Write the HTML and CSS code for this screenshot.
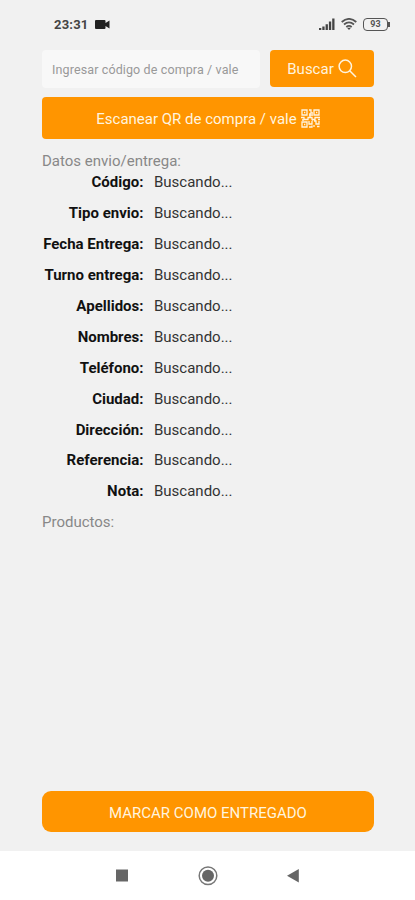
FILE: index.html
```html
<!DOCTYPE html>
<html lang="es">
<head>
    <meta charset="UTF-8">
    <meta name="viewport" content="width=device-width, initial-scale=1.0">
    <title>Entregas</title>
    <link rel="stylesheet" href="styles.css">
</head>
<body>
    <header class="status-bar">
        <span class="clock">23:31</span>
        <svg class="camera" width="15" height="9" viewBox="0 0 15 9"><path d="M1 0h8.500q1 0 1 1v2L14.500 .5v8L10.500 6v2q0 1-1 1H1Q0 9 0 8V1Q0 0 1 0z"/></svg>
        <div class="status-icons">
            <svg width="16" height="12" viewBox="0 0 16 12"><path d="M0 10h2.300v2H0zM3.300 8.500h2.300V12H3.300zM6.600 6.300h2.300V12H6.600zM9.900 3.500h2.300V12H9.900zM13.200 .5h2.300V12h-2.300z"/></svg>
            <svg width="16" height="12" viewBox="0 0 16 12" fill="none" stroke="#555" stroke-width="1.800"><path d="M.7 4Q8-2.200 15.300 4M3 6.500q5-4.200 10 0M5.300 9q2.700-2.200 5.400 0"/><path d="M6 9.800h4L8 12z" fill="#444" stroke="none"/></svg>
            <div class="battery">93</div>
        </div>
    </header>

    <main class="container">
        <div class="search">
            <input class="code-input" type="text" placeholder="Ingresar código de compra / vale">
            <button class="button button-search">
                Buscar
                <svg width="19" height="19" viewBox="0 0 19 19" fill="none" stroke="#fff4df" stroke-width="1.500"><circle cx="7.300" cy="7.300" r="6.200"/><path d="M11.700 11.700l6.300 6.300"/></svg>
            </button>
        </div>
        <button class="button button-scan">
            Escanear QR de compra / vale
            <svg width="19" height="19" viewBox="0 0 19 19" fill="none" stroke="#fff4df" stroke-width="1.300">
                <path d="M1 1h5v5H1zM13 1h5v5h-5zM1 13h5v5H1z"/>
                <path d="M3 3.500h1.300M15 3.500h1.300M3 15.500h1.300M8 1h2v3h2M8 6h4M9 4v4M0 8.500h3v2h4v-2h4v2h3v-2h5M1 11h2M8 12v3h3v-3M8 18h3v-1.500M13 12h2v3h3v-3M13 18v-2M16 17.500h2.500M11 11h1M17 10.500h2"/>
            </svg>
        </button>

        <h2 class="section-title">Datos envio/entrega:</h2>
        <dl class="details">
            <dt>Código:</dt><dd>Buscando...</dd>
            <dt>Tipo envio:</dt><dd>Buscando...</dd>
            <dt>Fecha Entrega:</dt><dd>Buscando...</dd>
            <dt>Turno entrega:</dt><dd>Buscando...</dd>
            <dt>Apellidos:</dt><dd>Buscando...</dd>
            <dt>Nombres:</dt><dd>Buscando...</dd>
            <dt>Teléfono:</dt><dd>Buscando...</dd>
            <dt>Ciudad:</dt><dd>Buscando...</dd>
            <dt>Dirección:</dt><dd>Buscando...</dd>
            <dt>Referencia:</dt><dd>Buscando...</dd>
            <dt>Nota:</dt><dd>Buscando...</dd>
        </dl>
        <h2 class="section-title">Productos:</h2>

        <button class="button button-deliver">MARCAR COMO ENTREGADO</button>
    </main>

    <nav class="nav-bar">
        <svg width="20" height="20" viewBox="0 0 20 20"><path d="M4 3.500h12v12H4z"/></svg>
        <svg width="20" height="20" viewBox="0 0 20 20"><circle cx="10" cy="9.800" r="8.800" fill="none" stroke="#777" stroke-width="1.500"/><circle cx="10" cy="9.800" r="6"/></svg>
        <svg width="20" height="20" viewBox="0 0 20 20"><path d="M14.800 3v13.500L3 9.800z"/></svg>
    </nav>
</body>
</html>
```

FILE: styles.css
```css
* {
    box-sizing: border-box;
}
body {
    display: flex;
    flex-direction: column;
    height: 900px;
    margin: 0;
    background-color: #f1f1f1;
    color: #333;
    font-family: Roboto, "Liberation Sans", sans-serif;
    font-size: 15px;
}
svg {
    flex: none;
}
.status-bar {
    display: flex;
    align-items: center;
    height: 50px;
    padding: 0 25px 2px 54px;
    fill: #444;
}
.clock {
    color: #444;
    font-size: 13px;
    font-weight: bold;
    letter-spacing: 0.2px;
}
.camera {
    margin-left: 6px;
    fill: #222;
}
.status-icons {
    display: flex;
    align-items: center;
    gap: 6px;
    margin-left: auto;
}
.battery {
    position: relative;
    width: 25px;
    height: 13px;
    margin-right: 2px;
    border: 1.5px solid #555;
    border-radius: 4px;
    color: #555;
    font-size: 9px;
    font-weight: bold;
    line-height: 11px;
    text-align: center;
}
.battery::after {
    content: "";
    position: absolute;
    top: 3px;
    right: -3px;
    width: 2px;
    height: 5px;
    background-color: #555;
}
.container {
    display: flex;
    flex: 1;
    flex-direction: column;
    padding: 0 41px 19px 42px;
}
.search {
    display: flex;
    gap: 10px;
}
.code-input {
    width: 218px;
    height: 38px;
    padding: 0 10px;
    border: none;
    border-radius: 4px;
    background-color: #f8f8f8;
    font-family: inherit;
    font-size: 12.5px;
    letter-spacing: 0.12px;
}
.code-input::placeholder {
    color: #999;
}
.button {
    display: flex;
    align-items: center;
    justify-content: center;
    gap: 4px;
    padding: 0;
    border: none;
    border-radius: 4px;
    background-color: #ff9500;
    color: #fff4df;
    font-family: inherit;
    font-size: 15px;
}
.button-search {
    flex: 1;
    height: 37px;
}
.button-scan {
    height: 42px;
    margin: 9px 0 13px;
    padding-top: 1px;
}
.button-deliver {
    height: 41px;
    margin-top: auto;
    padding-top: 2px;
    border-radius: 9px;
}
.section-title {
    margin: 0;
    color: #888;
    font-size: 15px;
    font-weight: normal;
    line-height: 18px;
}
.details {
    display: grid;
    grid-template-columns: 101.5px 1fr;
    grid-auto-rows: 30.95px;
    column-gap: 10.5px;
    margin: 0 0 3px;
    line-height: 24.5px;
}
.details dt {
    color: #111;
    font-weight: bold;
    text-align: right;
    white-space: nowrap;
}
.details dd {
    margin: 0;
}
.nav-bar {
    display: flex;
    justify-content: center;
    gap: 66px;
    height: 49px;
    padding-top: 15px;
    background-color: #fff;
    fill: #666;
}
```
